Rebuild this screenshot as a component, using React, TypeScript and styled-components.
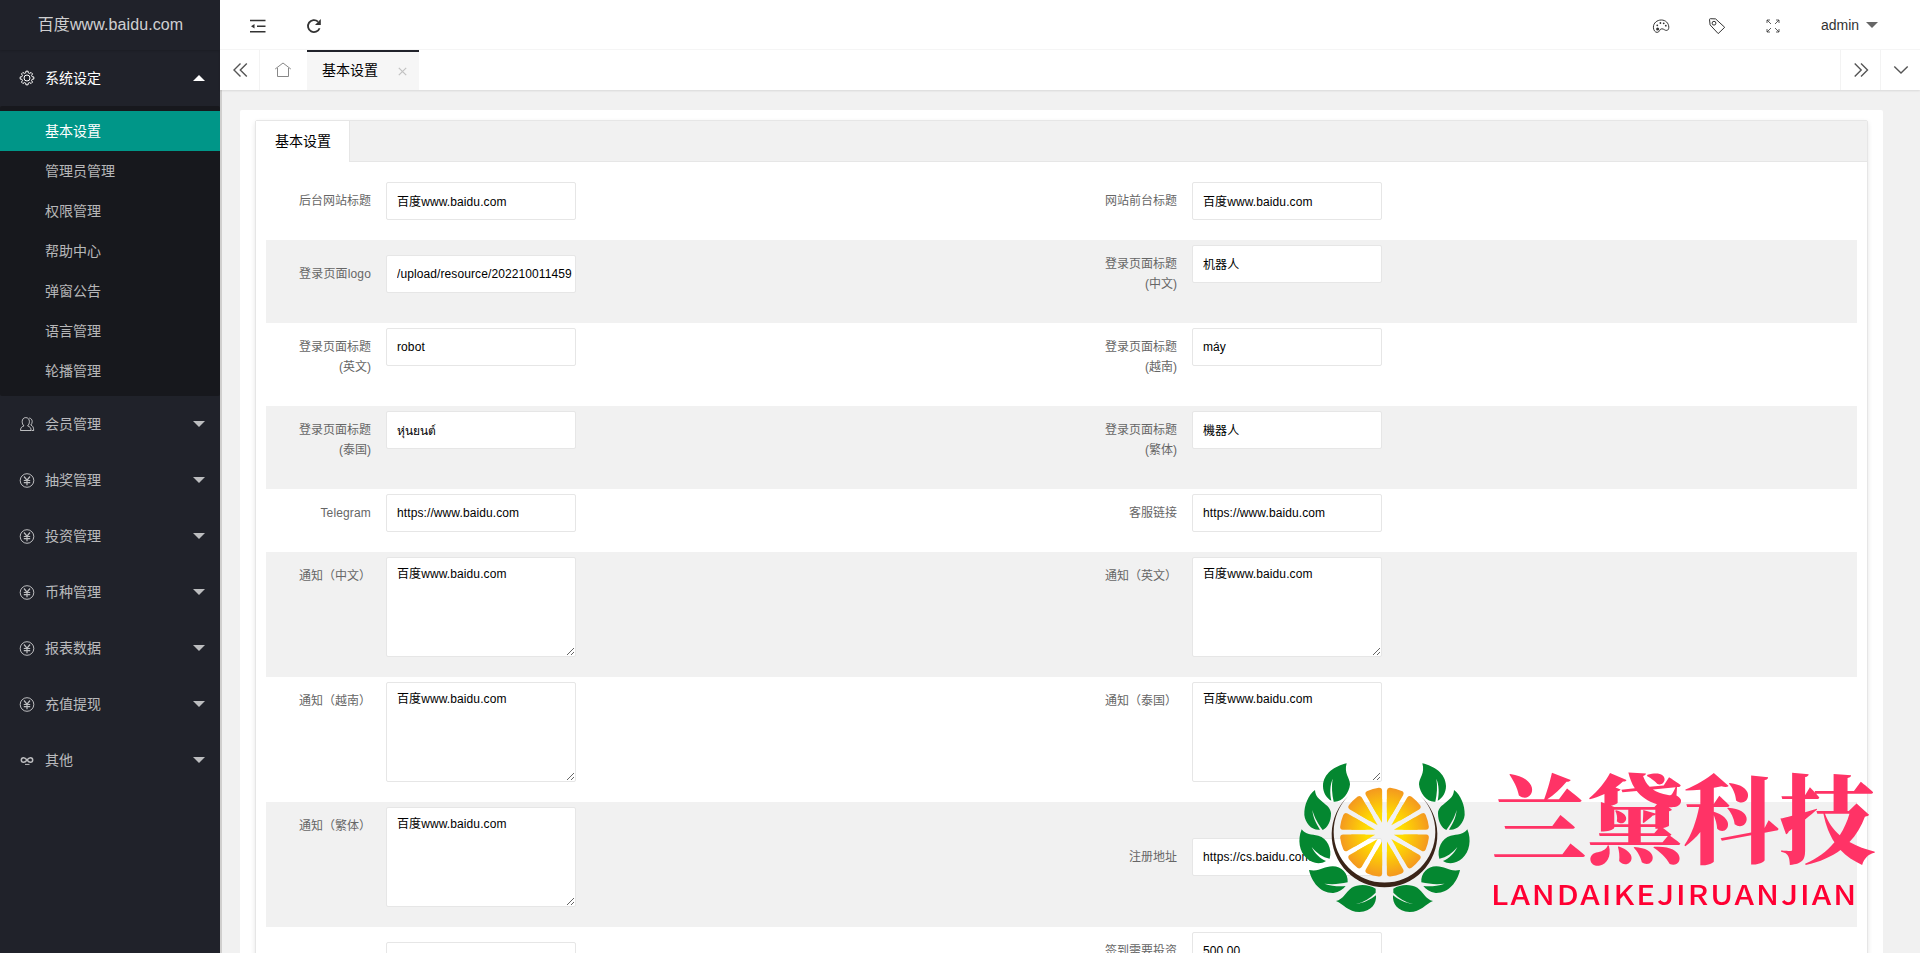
import React from 'react';
import styled, { createGlobalStyle } from 'styled-components';

const sans = `"Liberation Sans", "Noto Sans CJK SC", sans-serif`;

const GlobalStyle = createGlobalStyle`
  * { box-sizing: border-box; }
  html, body { margin: 0; height: 100%; overflow: hidden; }
  body { background: #f1f1f1; font-family: ${sans}; font-size: 14px; color: #333; }
  input, textarea { font-family: ${sans}; }
`;

/* ---------- frame ---------- */

const Shell = styled.div`
  display: flex;
  width: 100%;
  height: 953px;
  overflow: hidden;
`;

const Sidebar = styled.aside`
  flex: 0 0 220px;
  background: #20222a;
  box-shadow: 2px 0 0 #d0cfce;
`;

const Brand = styled.div`
  height: 50px;
  padding: 0 15px 0 16px;
  line-height: 50px;
  text-align: center;
  font-size: 16px;
  letter-spacing: 0.1px;
  color: rgba(255, 255, 255, 0.8);
  box-shadow: 0 1px 2px 0 rgba(0, 0, 0, 0.15);
`;

const Main = styled.div`
  position: relative;
  flex: 1;
  min-width: 0;
  display: flex;
  flex-direction: column;
`;

/* ---------- side menu ---------- */

const MenuItem = styled.div<{ $open?: boolean }>`
  display: flex;
  align-items: center;
  height: 56px;
  padding: 0 15px 0 19px;
  color: ${(p) => (p.$open ? '#fff' : 'rgba(255,255,255,.7)')};
  svg { flex: none; }
`;

const MenuLabel = styled.span`
  flex: 1;
  margin-left: 10px;
  line-height: 20px;
`;

const Caret = styled.i<{ $up?: boolean; $color?: string }>`
  border: 6px solid transparent;
  ${(p) =>
    p.$up
      ? `border-bottom-color: ${p.$color || 'currentColor'}; border-top-width: 0;`
      : `border-top-color: ${p.$color || 'currentColor'}; border-bottom-width: 0;`}
`;

const SubMenu = styled.div`
  padding: 5px 0;
  background: #17181d;
  border-radius: 2px;
`;

const SubItem = styled.div<{ $active?: boolean }>`
  height: 40px;
  padding-left: 45px;
  line-height: 40px;
  color: ${(p) => (p.$active ? '#fff' : 'rgba(255,255,255,.7)')};
  background: ${(p) => (p.$active ? '#009688' : 'transparent')};
`;

/* ---------- header ---------- */

const Header = styled.header`
  display: flex;
  flex: none;
  align-items: center;
  justify-content: space-between;
  height: 50px;
  padding: 0 43px 0 29px;
  background: #fff;
  border-bottom: 1px solid #f6f6f6;
`;

const Tools = styled.div`
  display: flex;
  align-items: center;
  gap: 38px;
  padding-top: 2px;
`;

const User = styled.div`
  display: flex;
  align-items: center;
  gap: 7px;
  width: 56px;
  margin-left: 1px;
  padding-bottom: 2px;
  line-height: 20px;
`;

const TabBar = styled.nav`
  display: flex;
  flex: none;
  height: 40px;
  background: #fff;
  box-shadow: 0 1px 2px 0 rgba(0, 0, 0, 0.1);
  z-index: 1;
`;

const TabControl = styled.div<{ $w: number; $side?: 'left' | 'right' }>`
  display: flex;
  align-items: center;
  justify-content: center;
  width: ${(p) => p.$w}px;
  color: #555;
  ${(p) => (p.$side ? `border-${p.$side}: 1px solid #f3f3f3;` : '')}
`;

const PageTab = styled.div`
  display: flex;
  align-items: center;
  justify-content: space-between;
  width: 112px;
  margin-left: 1px;
  padding: 0 12px 3px 15px;
  background: #f6f6f6;
  border-top: 2px solid #20222a;
  color: #000;
  line-height: 34px;
  svg { margin-top: 3px; }
`;

const Spacer = styled.div`
  flex: 1;
`;

/* ---------- form card ---------- */

const Content = styled.main`
  flex: 1;
  min-height: 0;
  overflow: hidden;
  padding: 20px 37px 0 20px;
`;

const Card = styled.section`
  height: 1000px;
  padding: 10px 15px 0;
  background: #fff;
  border-radius: 2px;
`;

const TabCard = styled.div`
  height: 980px;
  border: 1px solid #e6e6e6;
  border-radius: 2px;
  box-shadow: 0 2px 5px 0 rgba(0, 0, 0, 0.1);
`;

const TabHead = styled.div`
  height: 41px;
  background: #f1f1f1;
  border-bottom: 1px solid #e6e6e6;
`;

const TabTitle = styled.div`
  width: 94px;
  height: 41px;
  padding-left: 19px;
  line-height: 40px;
  white-space: nowrap;
  background: #fff;
  border-right: 1px solid #e6e6e6;
  color: #000;
`;

const Form = styled.form`
  padding: 15px 10px 0;
`;

const Row = styled.div<{ $shade: boolean }>`
  display: grid;
  grid-template-columns: 806px 1fr;
  padding: 5px 0 20px;
  background: ${(p) => (p.$shade ? '#f1f1f1' : '#fff')};
`;

const Field = styled.div<{ $top?: boolean }>`
  display: flex;
  align-items: ${(p) => (p.$top ? 'flex-start' : 'center')};
  padding-left: 10px;
`;

const Label = styled.label<{ $latin?: boolean }>`
  flex: none;
  width: 110px;
  padding: 9px 15px;
  text-align: right;
  font-size: 12px;
  line-height: 20px;
  letter-spacing: ${(p) => (p.$latin ? '0.15px' : '0')};
  color: #666;
`;

const Input = styled.input<{ $cjk?: boolean }>`
  width: 190px;
  height: 38px;
  padding: 0 0 ${(p) => (p.$cjk ? 2 : 0)}px 10px;
  border: 1px solid #e6e6e6;
  border-radius: 2px;
  background: #fff;
  font-size: 12px;
  letter-spacing: 0.1px;
  color: #000;
  outline: none;
`;

const Area = styled.textarea`
  display: block;
  width: 190px;
  height: 100px;
  padding: 6px 10px;
  border: 1px solid #e6e6e6;
  border-radius: 2px;
  background: #fff;
  font-size: 12px;
  line-height: 20px;
  letter-spacing: 0.1px;
  color: #000;
  resize: vertical;
  outline: none;
`;

/* ---------- watermark ---------- */

const Watermark = styled.div`
  position: fixed;
  left: 1290px;
  top: 750px;
  display: flex;
  pointer-events: none;
`;

const Words = styled.div`
  width: 400px;
  margin-left: 11px;
`;

const CompanyName = styled.div`
  height: 121px;
  line-height: 127px;
  font-family: "Noto Serif CJK SC", "Noto Sans CJK SC", serif;
  font-weight: 900;
  font-size: 96px;
  white-space: nowrap;
  color: #ff3366;
`;

const CompanyLatin = styled.div`
  line-height: 44px;
  font-family: "Noto Sans CJK SC", sans-serif;
  font-weight: 500;
  font-size: 27.5px;
  letter-spacing: 1.7px;
  white-space: nowrap;
  color: #ff0033;
  transform: scaleX(1.14);
  transform-origin: 0 50%;
`;

/* ---------- icons ---------- */

const Svg = ({ w = 16, h = 16, sw = 1, children }: { w?: number; h?: number; sw?: number; children: React.ReactNode }) => (
  <svg width={w} height={h} viewBox={`0 0 ${w} ${h}`} fill="none" stroke="currentColor" strokeWidth={sw}>
    {children}
  </svg>
);

const gearPath = (() => {
  const pts: string[] = [];
  for (let i = 0; i < 8; i++) {
    [[-14, 5.3], [-9, 6.9], [9, 6.9], [14, 5.3]].forEach(([d, r]) => {
      const a = ((i * 45 + d) * Math.PI) / 180;
      pts.push(`${(8 + r * Math.cos(a)).toFixed(2)},${(8 + r * Math.sin(a)).toFixed(2)}`);
    });
  }
  return `M${pts.join('L')}Z`;
})();

const GearIcon = () => (
  <Svg><path d={gearPath} strokeLinejoin="round" /><circle cx="8" cy="8" r="3" /></Svg>
);
const UserIcon = () => (
  <Svg>
    <path d="M1.500 14.500c0-2.700 1.200-3.800 3.500-4.600C3.700 8.800 3.200 7.300 3.200 5.600 3.200 3.200 4.600 1.600 6.800 1.600s3.600 1.600 3.600 4c0 1.700-.6 3.200-1.800 4.300 2.300.8 3.500 1.900 3.500 4.600z" />
    <path d="M10.200 2c2 .3 3 1.700 3 3.600 0 1.400-.5 2.500-1.400 3.400 1.900.8 2.900 2.200 2.900 5.500h-2" />
  </Svg>
);
const YenIcon = () => (
  <Svg>
    <circle cx="8" cy="8.500" r="6.800" />
    <path d="M5 4.500l3 3.700 3-3.700M8 8.200v5M4.800 8.500h6.400M4.800 10.700h6.400" strokeWidth="1.200" />
  </Svg>
);
const LoopIcon = () => (
  <Svg sw={1.500}>
    <path d="M8 8C6.800 6.400 5.900 5.700 4.600 5.700a2.300 2.300 0 000 4.600C5.900 10.300 6.800 9.600 8 8s2.100-2.300 3.400-2.300a2.300 2.300 0 010 4.600C10.100 10.300 9.200 9.600 8 8z" />
    <path d="M6 12.400h4.500" strokeWidth="1" />
  </Svg>
);
const ShrinkIcon = () => (
  <Svg w={18} h={18} sw={1.500}>
    <path d="M1 3.400h15.500M8 9.200h8.500M1 14.800h15.500" />
    <path d="M5.500 7v4.400L2 9.200z" fill="currentColor" stroke="none" />
  </Svg>
);
const RefreshIcon = () => (
  <Svg w={18} h={18} sw={1.800}>
    <path d="M14.600 11.200A6 6 0 1113 4.600" />
    <path d="M15.800 2v5.900H10z" fill="currentColor" stroke="none" />
  </Svg>
);
const PaletteIcon = () => (
  <Svg w={18} h={18}>
    <path d="M9.300 3C5 3 1.400 6 1.400 10.200c0 3 1.700 5.200 3.800 5.200 2.600 0 2-3.500 4.600-3.600 2.300 0 3 1.900 5 1.600 1.400-.2 2-1.500 2-3.200C16.700 6.100 13.600 3 9.300 3z" />
    <g fill="currentColor" stroke="none">
      <circle cx="5.600" cy="12" r="1.500" /><circle cx="5.300" cy="8.300" r=".9" />
      <circle cx="8.400" cy="6" r=".9" /><circle cx="11.700" cy="6.300" r=".9" /><circle cx="13.800" cy="8.700" r=".9" />
    </g>
  </Svg>
);
const TagIcon = () => (
  <Svg w={18} h={18}>
    <path d="M1.500 2.600c0-.6.300-.9.900-.9l5.200.2 9.100 8.400-6.500 6.300-8.100-8.700z" strokeLinejoin="round" />
    <circle cx="6" cy="6.200" r="1.900" />
  </Svg>
);
const FullIcon = () => (
  <Svg w={18} h={18}>
    <path d="M3 6V3h3M3 3l4 4M12 3h3v3M15 3l-4 4M3 12v3h3M3 15l4-4M15 12v3h-3M15 15l-4-4" strokeWidth=".8" />
  </Svg>
);
const DoubleLeft = () => (
  <Svg sw={1.400}><path d="M8.500 1.500L2 8l6.500 6.500M14.800 1.500L8.300 8l6.500 6.500" /></Svg>
);
const DoubleRight = () => (
  <Svg sw={1.400}><path d="M1.700 1.500L8.200 8l-6.500 6.500M8 1.500L14.500 8 8 14.500" /></Svg>
);
const DownIcon = () => (
  <Svg sw={1.400}><path d="M1.300 4.500L8 11l6.700-6.500" /></Svg>
);
const HomeIcon = () => (
  <Svg w={18} h={18}><path d="M1.200 8L9 2l7.800 6M3.500 7v8.500h11V7" stroke="#888" /></Svg>
);
const CloseIcon = () => (
  <Svg w={9} h={9} sw={1.200}><path d="M.8.800l7.400 7.400M8.200.800L.8 8.200" stroke="#c2c2c2" /></Svg>
);

/* ---------- emblem ---------- */

const leaves = [
  'M170,40 C135,48 100,70 99,108 C99,128 110,145 124,152 C119,130 120,105 128,86 C124,108 126,132 131,155 C155,158 178,130 180,103 C180,85 161,70 170,40Z',
  'M75,120 C55,135 42,165 43,195 C46,220 65,242 90,239 C78,220 70,205 67,180 C74,205 85,222 98,240 C112,235 123,215 123,190 C122,160 76,155 75,120Z',
  'M35,238 C22,270 28,305 50,325 C65,340 90,345 108,333 C90,325 75,312 65,291 C80,310 98,322 119,326 C127,295 112,265 85,257 C65,253 46,254 35,238Z',
  'M57,360 C65,395 90,430 130,429 C148,426 160,418 167,408 C145,410 125,408 103,401 C128,404 150,402 173,397 C175,370 155,349 128,349 C100,349 90,366 57,360Z',
  'M138,453 C160,448 168,425 185,413 C205,402 235,402 257,416 L257,428 C240,445 220,457 198,462 C222,460 242,448 258,436 C260,460 245,485 208,486 C175,486 160,462 138,453Z',
];

const polar = (r: number, deg: number) => {
  const a = (deg * Math.PI) / 180;
  return `${(r * Math.sin(a)).toFixed(1)},${(-r * Math.cos(a)).toFixed(1)}`;
};

const Emblem = () => (
  <svg width="190" height="175" viewBox="0 0 570 525">
    <defs>
      <radialGradient id="pulp" gradientUnits="userSpaceOnUse" cx="0" cy="0" r="140">
        <stop offset="0.400" stopColor="#ffdc00" />
        <stop offset="1" stopColor="#f39322" />
      </radialGradient>
    </defs>
    <g fill="#048730">
      {leaves.map((d) => <path key={d} d={d} />)}
      <g transform="translate(567 0) scale(-1 1)">
        {leaves.map((d) => <path key={d} d={d} />)}
      </g>
    </g>
    <path fill="#3a2418" d="M175,138 A158.500,158.500 0 1 0 392,138 A152.500,152.500 0 1 1 175,138Z" />
    <g transform="translate(283.500 246.500)" fill="url(#pulp)">
      {Array.from({ length: 12 }, (_, i) => {
        const mid = i * 30 + 15;
        return (
          <React.Fragment key={i}>
            <path
              d={`M${polar(62, mid)} L${polar(125, mid + 7.600)} A125,125 0 0 0 ${polar(125, mid - 7.600)}Z`}
              stroke="url(#pulp)"
              strokeWidth="18"
              strokeLinejoin="round"
            />
            <path d={`M${polar(29, mid)} L${polar(100, mid + 10.900)} L${polar(100, mid - 10.900)}Z`} />
          </React.Fragment>
        );
      })}
    </g>
  </svg>
);

/* ---------- data ---------- */

const subItems = ['基本设置', '管理员管理', '权限管理', '帮助中心', '弹窗公告', '语言管理', '轮播管理'];

const menu = [
  { label: '会员管理', icon: UserIcon },
  { label: '抽奖管理', icon: YenIcon },
  { label: '投资管理', icon: YenIcon },
  { label: '币种管理', icon: YenIcon },
  { label: '报表数据', icon: YenIcon },
  { label: '充值提现', icon: YenIcon },
  { label: '其他', icon: LoopIcon },
];

type FieldDef = { label: string; value: string; area?: boolean; top?: boolean };

const site = '百度www.baidu.com';
const rows: [FieldDef, FieldDef][] = [
  [{ label: '后台网站标题', value: site }, { label: '网站前台标题', value: site }],
  [{ label: '登录页面logo', value: '/upload/resource/202210011459' }, { label: '登录页面标题(中文)', value: '机器人', top: true }],
  [{ label: '登录页面标题(英文)', value: 'robot', top: true }, { label: '登录页面标题(越南)', value: 'máy', top: true }],
  [{ label: '登录页面标题(泰国)', value: 'หุ่นยนต์', top: true }, { label: '登录页面标题(繁体)', value: '機器人', top: true }],
  [{ label: 'Telegram', value: 'https://www.baidu.com' }, { label: '客服链接', value: 'https://www.baidu.com' }],
  [{ label: '通知（中文）', value: site, area: true, top: true }, { label: '通知（英文）', value: site, area: true, top: true }],
  [{ label: '通知（越南）', value: site, area: true, top: true }, { label: '通知（泰国）', value: site, area: true, top: true }],
  [{ label: '通知（繁体）', value: site, area: true, top: true }, { label: '注册地址', value: 'https://cs.baidu.com' }],
  [{ label: '', value: '' }, { label: '签到需要投资金额', value: '500.00', top: true }],
];

const FormField = ({ label, value, area, top }: FieldDef) => (
  <Field $top={top}>
    <Label $latin={/[a-z]/.test(label)}>{label}</Label>
    {area ? <Area defaultValue={value} /> : <Input $cjk={/[\u4e00-\u9fff]/.test(value)} defaultValue={value} />}
  </Field>
);

export default function App() {
  return (
    <>
      <GlobalStyle />
      <Shell>
        <Sidebar>
          <Brand>{site}</Brand>
          <MenuItem $open>
            <GearIcon />
            <MenuLabel>系统设定</MenuLabel>
            <Caret $up />
          </MenuItem>
          <SubMenu>
            {subItems.map((t, i) => <SubItem key={t} $active={i === 0}>{t}</SubItem>)}
          </SubMenu>
          {menu.map(({ label, icon: Icon }) => (
            <MenuItem key={label}>
              <Icon />
              <MenuLabel>{label}</MenuLabel>
              <Caret />
            </MenuItem>
          ))}
        </Sidebar>
        <Main>
          <Header>
            <Tools>
              <ShrinkIcon />
              <RefreshIcon />
            </Tools>
            <Tools>
              <PaletteIcon />
              <TagIcon />
              <FullIcon />
              <User>admin <Caret $color="#666" /></User>
            </Tools>
          </Header>
          <TabBar>
            <TabControl $w={40} $side="right"><DoubleLeft /></TabControl>
            <TabControl $w={46}><HomeIcon /></TabControl>
            <PageTab>基本设置<CloseIcon /></PageTab>
            <Spacer />
            <TabControl $w={40} $side="left"><DoubleRight /></TabControl>
            <TabControl $w={40} $side="left"><DownIcon /></TabControl>
          </TabBar>
          <Content>
            <Card>
              <TabCard>
                <TabHead><TabTitle>基本设置</TabTitle></TabHead>
                <Form>
                  {rows.map(([a, b], i) => (
                    <Row key={i} $shade={i % 2 === 1}>
                      <FormField {...a} />
                      <FormField {...b} />
                    </Row>
                  ))}
                </Form>
              </TabCard>
            </Card>
          </Content>
        </Main>
      </Shell>
      <Watermark>
        <Emblem />
        <Words>
          <CompanyName>兰黛科技</CompanyName>
          <CompanyLatin>LANDAIKEJIRUANJIAN</CompanyLatin>
        </Words>
      </Watermark>
    </>
  );
}
